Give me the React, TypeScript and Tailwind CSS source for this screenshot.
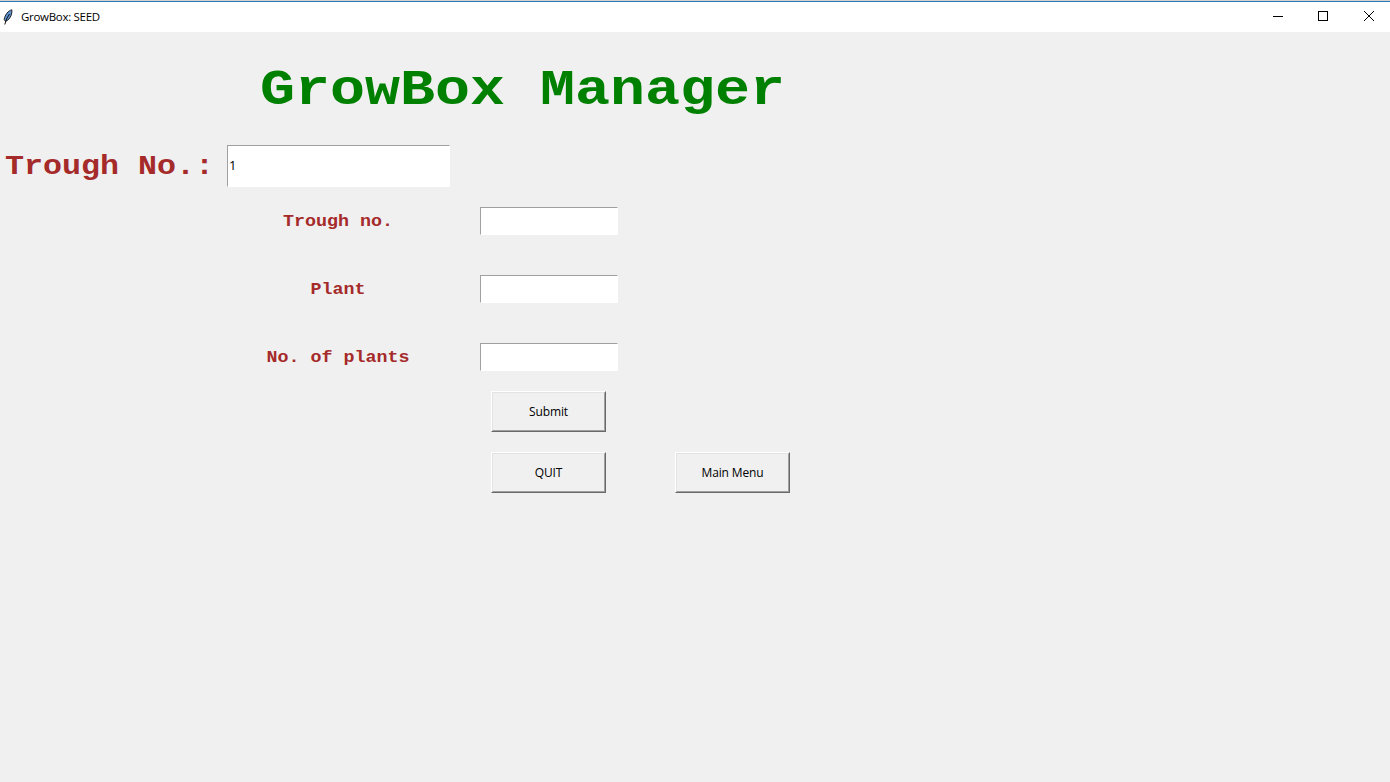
import { ReactNode } from "react";

function Entry({ className = "", children }: { className?: string; children?: ReactNode }) {
  return (
    <div className={`flex items-center border border-t-[#a0a0a0] border-l-[#a0a0a0] border-r-white border-b-white bg-white pl-px ${className}`}>
      {children}
    </div>
  );
}

function TkButton({ children }: { children: ReactNode }) {
  return (
    <button className="h-[41px] w-[115px] border border-t-white border-l-white border-r-[#696969] border-b-[#696969] text-xs tracking-[-0.15px] text-black">
      <span className="flex h-full w-full items-center justify-center border border-t-[#e3e3e3] border-l-[#e3e3e3] border-r-[#a0a0a0] border-b-[#a0a0a0]">
        {children}
      </span>
    </button>
  );
}

function Field({ label }: { label: string }) {
  return (
    <div className="flex h-7 items-center">
      <div className="w-[222px] origin-[50%_68%] scale-y-[0.92] pt-[2px] text-center font-['Courier_New','Liberation_Mono',monospace] text-[18.33px] leading-7 font-bold text-[#a52a2a]">
        {label}
      </div>
      <Entry className="ml-[31px] h-7 w-[138px]" />
    </div>
  );
}

export default function App() {
  return (
    <div className="flex h-[782px] w-[1390px] flex-col overflow-hidden bg-[#f0f0f0] font-['Open_Sans',sans-serif] text-black">
      <header className="flex h-8 shrink-0 flex-col bg-white">
        <div className="h-px bg-[#d4d0cc]" />
        <div className="h-px bg-[#2a7ab8]" />
        <div className="flex flex-1 items-center">
          <svg className="ml-[2px] h-4 w-3" viewBox="0 0 12 16">
            <path d="M9.800 .8C6.500 1.500 3 5.500 2.200 10.500l1.300 2C6.800 11.200 9.500 7.500 9.900 3z" fill="#5c93d0" stroke="#222" strokeWidth="1" />
            <path d="M7.500 5L4.500 10 2.800 15.500" fill="none" stroke="#111" strokeWidth="1" />
          </svg>
          <span className="ml-[7px] text-[11.5px] leading-4 tracking-[-0.3px] whitespace-nowrap">GrowBox: SEED</span>
          <svg className="ml-auto h-[30px] w-[117px]" viewBox="0 0 117 30" fill="none" stroke="#000" shapeRendering="crispEdges">
            <path d="M0 14.500h10M45.500 9.500h9v9h-9z" />
            <path d="M91 9l10 10M101 9l-10 10" shapeRendering="auto" />
          </svg>
        </div>
      </header>
      <main className="flex flex-col">
        <h1 className="mt-[25px] ml-[260px] h-[63px] origin-[0_47px] scale-y-[0.87] font-['Courier_New','Liberation_Mono',monospace] text-[58.33px] leading-[64px] font-bold whitespace-pre text-[#008000]">
          GrowBox Manager
        </h1>
        <div className="mt-[25px] flex h-[42px] items-center">
          <div className="w-[227px] origin-[0_70%] scale-y-[0.9] pl-[5px] font-['Courier_New','Liberation_Mono',monospace] text-[31.67px] leading-[42px] font-bold whitespace-pre text-[#a52a2a]">
            Trough No.:
          </div>
          <Entry className="h-[42px] w-[223px] text-[13px]">1</Entry>
        </div>
        <div className="mt-5 ml-[227px] flex flex-col gap-10">
          <Field label="Trough no." />
          <Field label="Plant" />
          <Field label="No. of plants" />
        </div>
        <div className="mt-5 ml-[491px] flex flex-col gap-5">
          <TkButton>Submit</TkButton>
          <div className="flex gap-[69px]">
            <TkButton>QUIT</TkButton>
            <TkButton>Main Menu</TkButton>
          </div>
        </div>
      </main>
    </div>
  );
}
